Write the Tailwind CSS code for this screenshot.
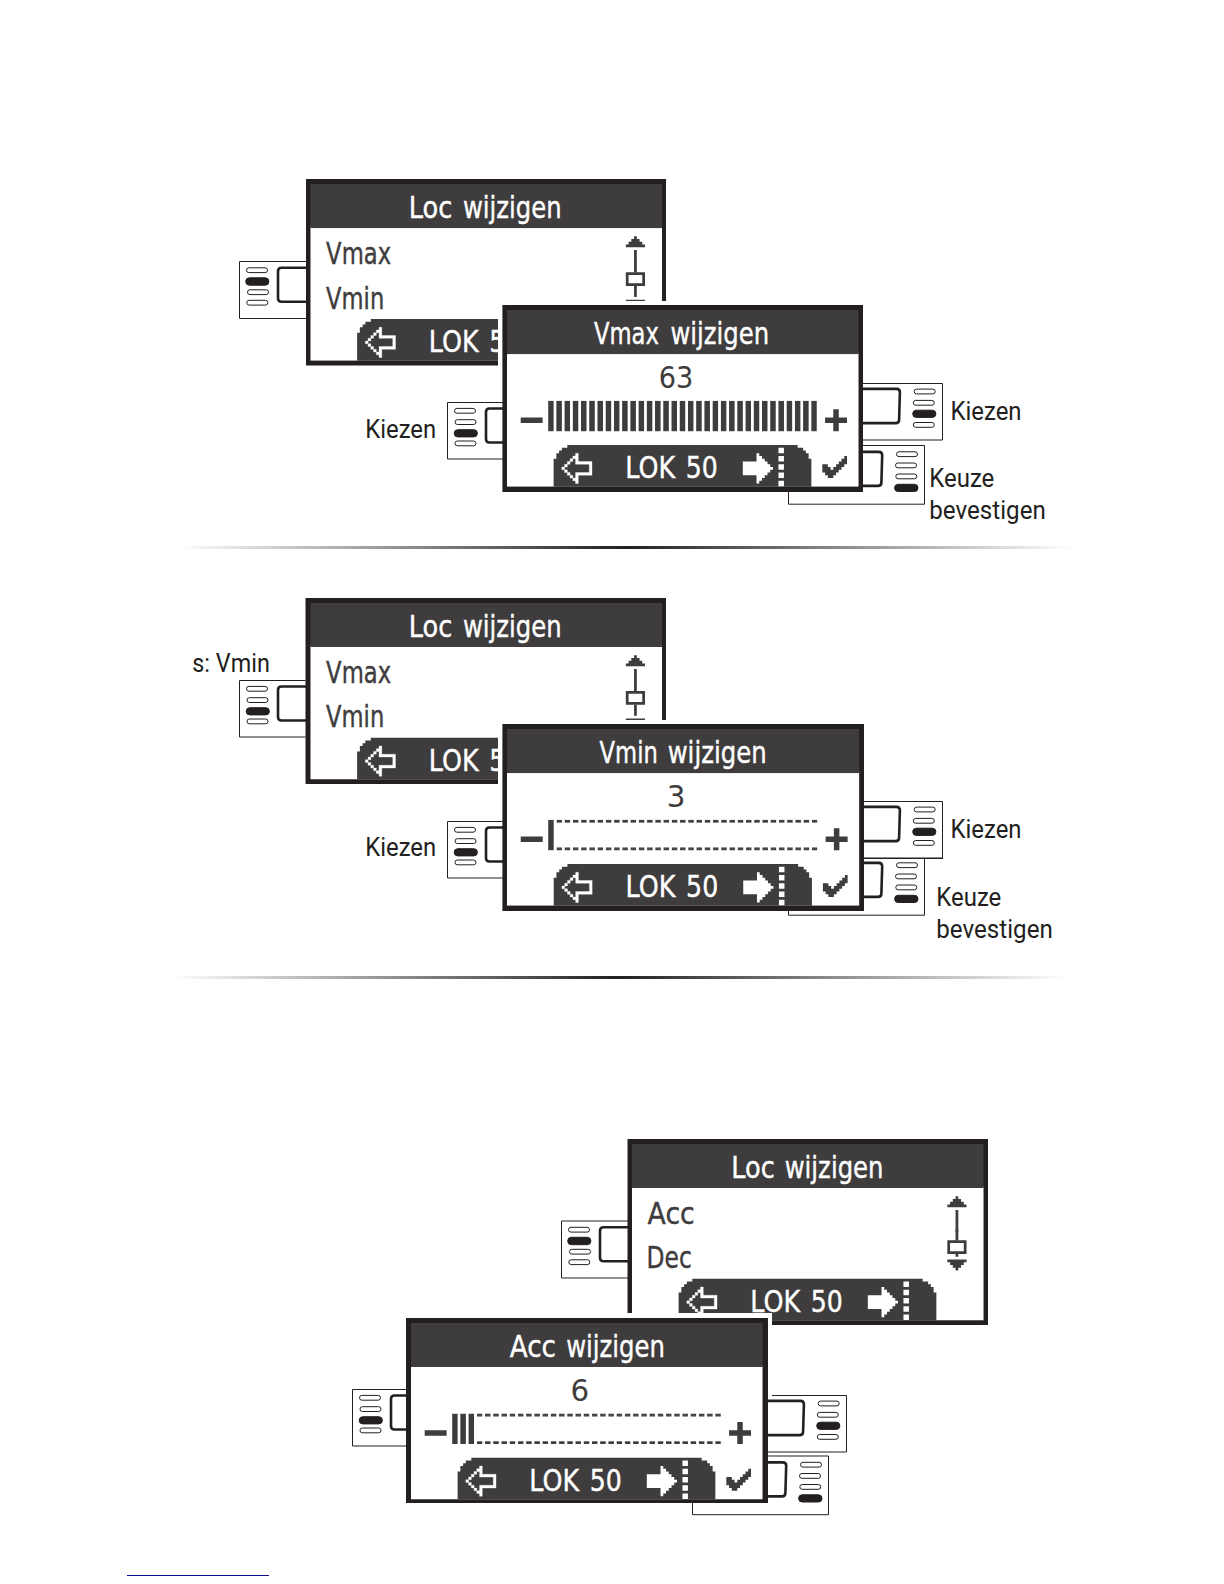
<!DOCTYPE html>
<html lang="nl">
<head>
<meta charset="utf-8">
<title>Loc wijzigen</title>
<script src="https://cdn.jsdelivr.net/npm/@tailwindcss/browser@4"></script>
</head>
<body class="bg-white">
<!-- shared parts; LCD parts use a 128 x 64 grid -->
<svg class="absolute size-0" aria-hidden="true">
  <defs>
    <g id="lcd" stroke="none">
      <rect y="15.500" width="128.200" height="48.600" fill="#fff"/>
      <rect width="128.200" height="16" fill="#3e3c3d"/>
      <path fill="#3e3c3d" d="M17 64.200V54h1v-2h1v-1h1v-1h2v-1h84v1h2v1h1v1h1v2h1v10.200z"/>
      <path fill="#fff" stroke="#fff" stroke-width=".12" d="M20 57h1v1h-1zM21 56h1v1h-1zM22 55h1v1h-1zM23 54h1v1h-1zM24 53h1v1h-1zM21 58h1v1h-1zM22 59h1v1h-1zM23 60h1v1h-1zM24 61h1v1h-1zM25 52h1v3h5v5h-5v3h-1v-4h5v-3h-5z"/>
      <path fill="#fff" d="M86 55h5v-3h1v1h1v1h1v1h1v1h1v1h1v1h-1v1h-1v1h-1v1h-1v1h-1v1h-1v-3h-5z"/>
      <path fill="#fff" d="M99 50h2v2h-2zM99 53h2v2h-2zM99 56h2v2h-2zM99 59h2v2h-2zM99 62h2v2h-2z"/>
      <g fill="#fff" stroke="#fff" stroke-width=".15" font-size="10.970">
        <text x="43.100" y="61" textLength="18.200" lengthAdjust="spacingAndGlyphs">LOK</text>
        <text x="65.200" y="61" textLength="11.700" lengthAdjust="spacingAndGlyphs">50</text>
      </g>
    </g>
    <text id="wij" y="12.200" textLength="36" lengthAdjust="spacingAndGlyphs" fill="#fff" stroke="#fff">wijzigen</text>
    <g id="edit" fill="#3e3c3d" stroke="none">
      <path d="M5 39h8v2H5zM116 39h3v-3h2v3h3v2h-3v3h-2v-3h-3z"/>
      <path d="M115 56h2v1h1v1h1v-1h1v-1h1v-1h1v-1h1v-1h1v3h-1v1h-1v1h-1v1h-1v1h-1v1h-2v-1h-1v-1h-1z"/>
    </g>
    <path id="up" fill="#3e3c3d" stroke="none" d="M118 19h1v1h1v1h1v1h1v1h-7v-1h1v-1h1v-1h1zM118 24h1v8.100h-1z"/>
    <path id="knob" fill="#3e3c3d" stroke="none" fill-rule="evenodd" d="M115 32h7v5h-7zM116 33v3h5v-3z"/>
    <path id="down" fill="#3e3c3d" stroke="none" d="M115 42h7v1h-1v1h-1v1h-1v1h-1v-1h-1v-1h-1v-1h-1z"/>
    <pattern id="bars" x="15" y="33" width="3" height="11" patternUnits="userSpaceOnUse"><path fill="#3e3c3d" stroke="none" d="M0 0h2v11H0z"/></pattern>
    <pattern id="dots" x="15" y="33" width="3" height="11" patternUnits="userSpaceOnUse"><path fill="#3e3c3d" stroke="none" d="M0 0h2v1H0zM0 10h2v1H0z"/></pattern>

    <g id="keyA" fill="#fff" stroke="#231f20">
      <path d="M70 0H0v57H70"/>
      <path stroke-width="2.600" d="M70 6.200H42q-3.500 0-3.500 3.500v27q0 3.500 3.500 3.500H70"/>
      <rect x="7" y="6.300" width="21" height="4.800" rx="2.400"/>
      <rect x="6.200" y="16.300" width="23.200" height="7.400" rx="3.700" fill="#231f20"/>
      <rect x="8" y="28.300" width="21" height="4.800" rx="2.400"/>
      <rect x="7.300" y="38.800" width="21" height="4.800" rx="2.400"/>
    </g>
    <g id="keyB" fill="#fff" stroke="#231f20">
      <path d="M66 0H0v56.500H66"/>
      <path stroke-width="2.600" d="M68 6H42q-3.500 0-3.500 3.500v27q0 3.500 3.500 3.500H68"/>
      <rect x="7" y="5.900" width="21" height="4.800" rx="2.400"/>
      <rect x="7.500" y="17.200" width="21" height="4.800" rx="2.400"/>
      <rect x="6.700" y="27.200" width="23.200" height="7.200" rx="3.600" fill="#231f20"/>
      <rect x="7.500" y="38.500" width="21" height="4.800" rx="2.400"/>
    </g>
    <!-- right-hand keys, origin at the top right corner of the outline -->
    <g id="keyC" fill="#fff" stroke="#231f20">
      <path d="M-86 0H0v56.500H-86"/>
      <path stroke-width="2.600" d="M-86 5.400H-46q3.400 0 3.400 3.400l-.8 27.400q0 3.400-3.400 3.400H-86"/>
      <rect x="-28.300" y="5.600" width="21" height="4.800" rx="2.400"/>
      <rect x="-29.200" y="16.900" width="21" height="4.800" rx="2.400"/>
      <rect x="-29.800" y="26.700" width="23.200" height="7.200" rx="3.600" fill="#231f20"/>
      <rect x="-29.200" y="39" width="21" height="4.800" rx="2.400"/>
    </g>
    <g id="keyD" fill="#fff" stroke="#231f20">
      <path d="M0 0v58.700H-136V0z"/>
      <path stroke-width="2.600" d="M-70 6.400H-45.700q3.400 0 3.400 3.400l-.8 27.200q0 3.400-3.400 3.400H-70"/>
      <rect x="-28" y="6.300" width="21" height="4.800" rx="2.400"/>
      <rect x="-29" y="17.500" width="21" height="4.800" rx="2.400"/>
      <rect x="-28.700" y="28.500" width="21" height="4.800" rx="2.400"/>
      <rect x="-29.900" y="38.800" width="23.400" height="7.200" rx="3.600" fill="#231f20"/>
    </g>
  </defs>
</svg>

<main class="flex h-[1584px] w-[1224px] flex-col overflow-hidden bg-white">
  <svg class="block h-[546px] w-full shrink-0 font-['DejaVu_Sans']" viewBox="0 0 1224 546">
    <use href="#keyA" x="239.500" y="261.500"/>
    <rect x="306" y="179" width="360" height="186.500" fill="#231f20"/>
    <g transform="translate(310.500 184) scale(2.742 2.755)" font-size="10.970" fill="#3e3c3d" stroke="#3e3c3d" stroke-width=".15">
      <use href="#lcd"/><use href="#up"/><use href="#knob"/><use href="#down"/><path stroke="none" d="M118 37h1v4h-1z"/>
      <text x="35.800" y="12.200" fill="#fff" stroke="#fff" textLength="15.900" lengthAdjust="spacingAndGlyphs">Loc</text>
      <use href="#wij" x="55.600"/>
      <text x="5.700" y="29.200" textLength="23.700" lengthAdjust="spacingAndGlyphs">Vmax</text>
      <text x="5.700" y="45.200" textLength="21.200" lengthAdjust="spacingAndGlyphs">Vmin</text>
    </g>
    <path fill="#fff" d="M498 301H868V496H498z"/>
    <use href="#keyB" x="447.500" y="402.500"/>
    <use href="#keyD" x="924.500" y="445.500"/>
    <use href="#keyC" x="942.500" y="383.500"/>
    <rect x="502.400" y="305" width="360.600" height="187" fill="#231f20"/>
    <g transform="translate(507 310) scale(2.742 2.755)" font-size="10.970" fill="#3e3c3d" stroke="#3e3c3d" stroke-width=".15">
      <use href="#lcd"/><use href="#edit"/>
      <text x="31.700" y="12.200" fill="#fff" stroke="#fff" textLength="23.700" lengthAdjust="spacingAndGlyphs">Vmax</text>
      <use href="#wij" x="59.600"/>
      <text x="55.300" y="28.200" textLength="12.600" stroke="none" lengthAdjust="spacingAndGlyphs">63</text>
      <rect x="15" y="33" width="98" height="11" fill="url(#bars)" stroke="none"/>
    </g>
    <g class="font-[Roboto]" font-size="25.300" fill="#231f20">
      <text x="365.200" y="437.600" textLength="71" lengthAdjust="spacingAndGlyphs">Kiezen</text>
      <text x="950.500" y="419.700" textLength="71" lengthAdjust="spacingAndGlyphs">Kiezen</text>
      <text x="929.300" y="486.700" textLength="65" lengthAdjust="spacingAndGlyphs">Keuze</text>
      <text x="929.300" y="518.700" textLength="116.500" lengthAdjust="spacingAndGlyphs">bevestigen</text>
    </g>
  </svg>

  <div class="ml-[178px] h-[3px] w-[896px] shrink-0 bg-linear-to-r from-transparent via-[#231f20] to-transparent"></div>

  <svg class="block h-[427px] w-full shrink-0 font-['DejaVu_Sans']" viewBox="0 549 1224 427">
    <use href="#keyB" x="239.500" y="680.500"/>
    <rect x="305.500" y="598" width="360.500" height="186" fill="#231f20"/>
    <g transform="translate(310.500 603) scale(2.742 2.750)" font-size="10.970" fill="#3e3c3d" stroke="#3e3c3d" stroke-width=".15">
      <use href="#lcd"/><use href="#up"/><use href="#knob"/><use href="#down"/><path stroke="none" d="M118 37h1v4h-1z"/>
      <text x="35.800" y="12.200" fill="#fff" stroke="#fff" textLength="15.900" lengthAdjust="spacingAndGlyphs">Loc</text>
      <use href="#wij" x="55.600"/>
      <text x="5.700" y="29.200" textLength="23.700" lengthAdjust="spacingAndGlyphs">Vmax</text>
      <text x="5.700" y="45.200" textLength="21.200" lengthAdjust="spacingAndGlyphs">Vmin</text>
    </g>
    <path fill="#fff" d="M498 720H868V914H498z"/>
    <use href="#keyB" x="447.500" y="821.500"/>
    <use href="#keyD" x="924.500" y="856.500"/>
    <use href="#keyC" x="942.500" y="801.500"/>
    <path d="M856 858.500H943" stroke="#231f20"/>
    <rect x="502.400" y="724" width="361.600" height="187" fill="#231f20"/>
    <g transform="translate(507 729) scale(2.747 2.755)" font-size="10.970" fill="#3e3c3d" stroke="#3e3c3d" stroke-width=".15">
      <use href="#lcd"/><use href="#edit"/>
      <text x="33.700" y="12.200" fill="#fff" stroke="#fff" textLength="21.200" lengthAdjust="spacingAndGlyphs">Vmin</text>
      <use href="#wij" x="58.500"/>
      <text x="58.200" y="28.200" textLength="6.800" stroke="none" lengthAdjust="spacingAndGlyphs">3</text>
      <path d="M15 33h2v11h-2z" stroke="none"/>
      <rect x="18" y="33" width="95" height="11" fill="url(#dots)" stroke="none"/>
    </g>
    <g class="font-[Roboto]" font-size="25.300" fill="#231f20">
      <text x="192.300" y="671.700" textLength="77.500" lengthAdjust="spacingAndGlyphs">s: Vmin</text>
      <text x="365.200" y="856.400" textLength="71" lengthAdjust="spacingAndGlyphs">Kiezen</text>
      <text x="950.500" y="837.700" textLength="71" lengthAdjust="spacingAndGlyphs">Kiezen</text>
      <text x="936.300" y="906" textLength="65" lengthAdjust="spacingAndGlyphs">Keuze</text>
      <text x="936.300" y="938" textLength="116.500" lengthAdjust="spacingAndGlyphs">bevestigen</text>
    </g>
  </svg>

  <div class="ml-[170px] h-[3px] w-[896px] shrink-0 bg-linear-to-r from-transparent via-[#231f20] to-transparent"></div>

  <svg class="block h-[596px] w-full shrink-0 font-['DejaVu_Sans']" viewBox="0 979 1224 596">
    <use href="#keyA" x="561.500" y="1221"/>
    <rect x="627.500" y="1139" width="360.500" height="186" fill="#231f20"/>
    <g transform="translate(632 1144) scale(2.742 2.750)" font-size="10.970" fill="#3e3c3d" stroke="#3e3c3d" stroke-width=".15">
      <use href="#lcd"/><use href="#up"/><path stroke="none" d="M118 31h1v4.100h-1zM118 40h1v1h-1z"/><use href="#knob" y="3"/><use href="#down"/>
      <text x="36.200" y="12.200" fill="#fff" stroke="#fff" textLength="15.900" lengthAdjust="spacingAndGlyphs">Loc</text>
      <use href="#wij" x="55.700"/>
      <text x="5.700" y="29" textLength="17.200" lengthAdjust="spacingAndGlyphs">Acc</text>
      <text x="5.300" y="45" textLength="16.500" lengthAdjust="spacingAndGlyphs">Dec</text>
    </g>
    <path fill="#fff" d="M402 1313H772V1398H402z"/>
    <use href="#keyB" x="352.500" y="1389.500"/>
    <use href="#keyD" x="828.500" y="1456"/>
    <use href="#keyC" x="846.500" y="1395.500"/>
    <path fill="#fff" d="M768 1390h4v8h-4z"/>
    <rect x="406" y="1318" width="362" height="185" fill="#231f20"/>
    <g transform="translate(411 1323) scale(2.742 2.750)" font-size="10.970" fill="#3e3c3d" stroke="#3e3c3d" stroke-width=".15">
      <use href="#lcd"/><use href="#edit"/>
      <text x="36" y="12.200" fill="#fff" stroke="#fff" textLength="16.900" lengthAdjust="spacingAndGlyphs">Acc</text>
      <use href="#wij" x="56.600"/>
      <text x="58.200" y="28.200" textLength="6.800" stroke="none" lengthAdjust="spacingAndGlyphs">6</text>
      <rect x="15" y="33" width="8.500" height="11" fill="url(#bars)" stroke="none"/>
      <rect x="24" y="33" width="89" height="11" fill="url(#dots)" stroke="none"/>
    </g>
  </svg>
  <div class="ml-[127px] h-px w-[142px] shrink-0 bg-[#0c0c8c]"></div>
</main>
</body>
</html>
